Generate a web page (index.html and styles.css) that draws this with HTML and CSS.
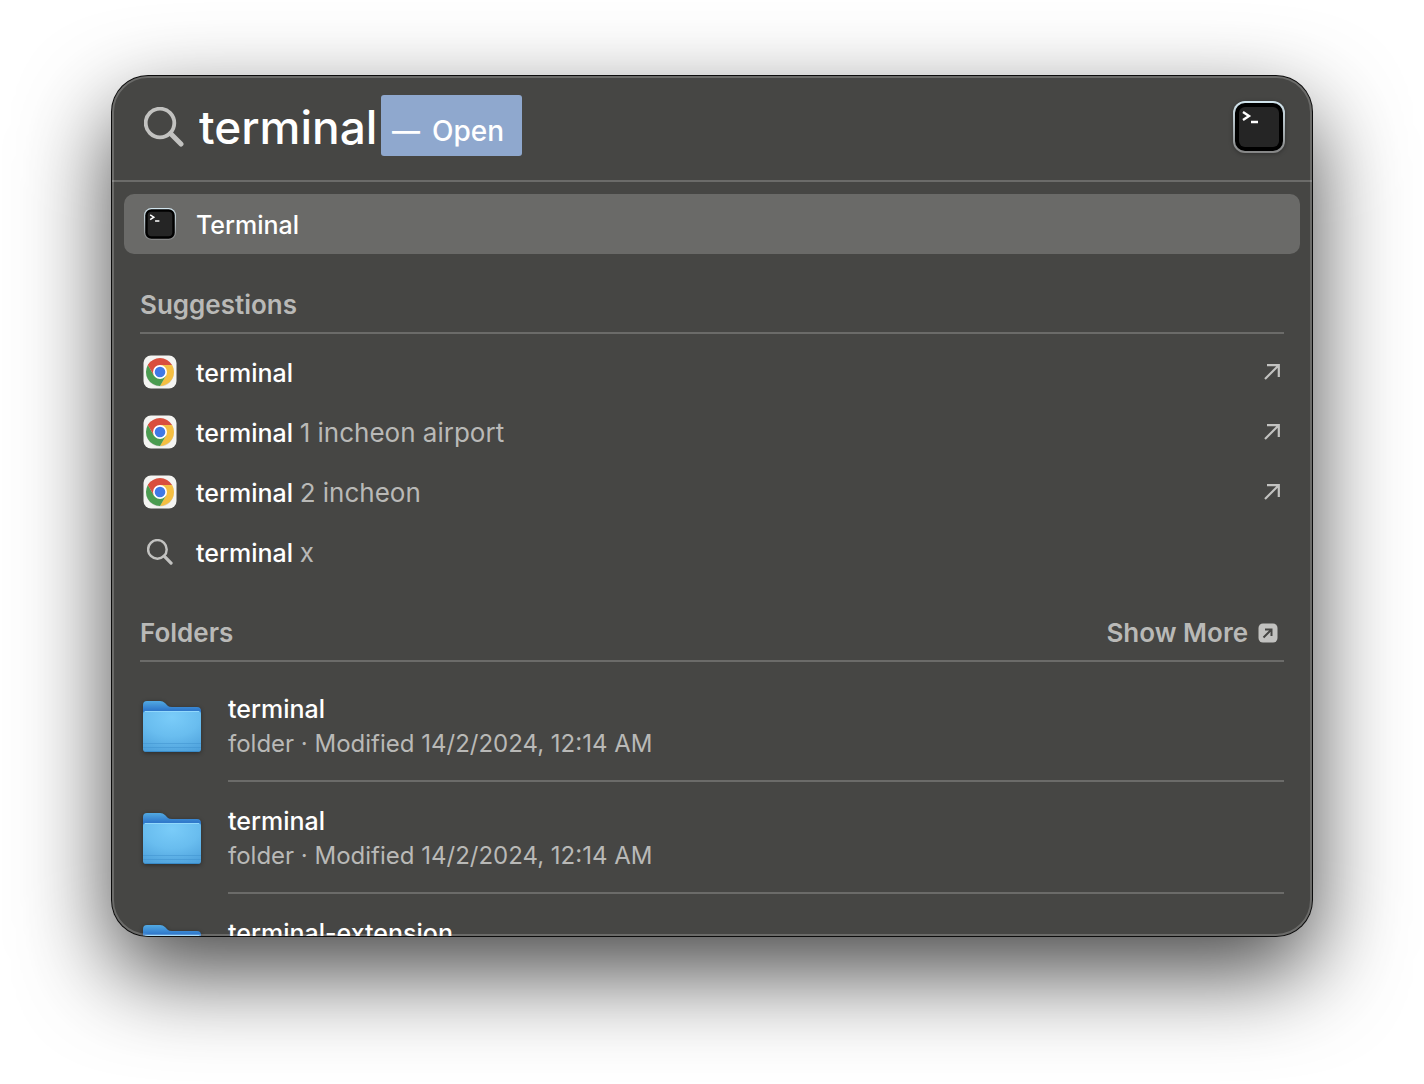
FILE: index.html
```html
<!DOCTYPE html>
<html lang="en">
<head>
<meta charset="utf-8">
<title>Search</title>
<link rel="stylesheet" href="styles.css">
</head>
<body>
<svg class="defs" aria-hidden="true">
  <defs>
    <linearGradient id="rim" x1="0" y1="0" x2="0" y2="1"><stop offset="0" stop-color="#d3e6ef"/><stop offset="1" stop-color="#858585"/></linearGradient>
    <radialGradient id="front" cx=".5" cy=".15" r=".95"><stop offset="0" stop-color="#7accf9"/><stop offset=".5" stop-color="#69bdef"/><stop offset="1" stop-color="#4c9fda"/></radialGradient>
    <linearGradient id="back" x1="0" y1="0" x2="0" y2="1"><stop offset="0" stop-color="#52aae3"/><stop offset=".3" stop-color="#3079cb"/></linearGradient>
    <symbol id="terminal" viewBox="0 0 52 52">
      <rect width="52" height="52" rx="12" fill="url(#rim)"/>
      <rect x="2" y="2" width="48" height="48" rx="10" fill="#000"/>
      <rect x="6" y="6" width="40" height="40" rx="6" fill="#252525"/>
      <path d="M10 11l6 4-6 4M18 21h7" fill="none" stroke="#fff" stroke-width="2.400"/>
    </symbol>
    <symbol id="chrome" viewBox="0 0 34 34">
      <rect x="0.5" y="0.5" width="33" height="33" rx="7.5" fill="#f4f4f2"/>
      <circle cx="17" cy="17.5" r="14" fill="#000" opacity=".12"/>
      <path d="M17 17 4.88 10A14 14 0 0 1 29.12 10Z" fill="#d94f3e"/>
      <path d="M17 10H29.12A14 14 0 0 1 17 31L23.06 20.5Z" fill="#f4bf42"/>
      <path d="M10.94 20.5 4.88 10A14 14 0 0 0 17 31L23.06 20.5 17 17Z" fill="#4a9c50"/>
      <path d="M17 10 10.94 20.5 4.88 10A14 14 0 0 1 8 6.3Z" fill="#d94f3e"/>
      <circle cx="17" cy="17" r="7" fill="#fff"/>
      <circle cx="17" cy="17" r="5.3" fill="#4079e6"/>
    </symbol>
    <symbol id="search" viewBox="0 0 40 40">
      <circle cx="16" cy="16" r="14.300" fill="none" stroke="currentColor" stroke-width="3.800"/>
      <path d="M26.500 26.500 37 37" stroke="currentColor" stroke-width="5" stroke-linecap="round"/>
    </symbol>
    <symbol id="arrow" viewBox="0 0 16 16">
      <path d="M1 15 14.500 1.500M3 1.200H14.800V13" fill="none" stroke="currentColor" stroke-width="2.200"/>
    </symbol>
    <symbol id="folder" viewBox="0 0 58 52">
      <path d="M0 4Q0 0 4 0H17Q20 0 22 2L25 5Q26 6 29 6H54Q58 6 58 10V30H0Z" fill="url(#back)"/>
      <path d="M0 13Q0 10 3 10H55Q58 10 58 13V48Q58 51 55 51H3Q0 51 0 48Z" fill="url(#front)"/>
      <path d="M2 10.500H56" stroke="#91d8fc"/>
      <path d="M0 42.500H58M0 46.500H58" stroke="#3f92cf" opacity=".5"/>
      <path d="M2 50.500H56" stroke="#398bc8"/>
    </symbol>
  </defs>
</svg>
<main class="panel">
  <header class="searchbar">
    <svg class="search-icon"><use href="#search"/></svg>
    <input class="query" type="text" value="terminal" aria-label="Search">
    <span class="completion"><span>—</span><span>Open</span></span>
    <svg class="app-icon"><use href="#terminal"/></svg>
  </header>
  <div class="results">
    <a class="row selected" href="#"><svg class="icon"><use href="#terminal"/></svg><span class="label">Terminal</span></a>
    <section>
      <div class="heading"><h2>Suggestions</h2></div>
      <div class="list">
        <a class="row" href="#"><svg class="icon chrome"><use href="#chrome"/></svg><span class="label">terminal</span><svg class="arrow"><use href="#arrow"/></svg></a>
        <a class="row" href="#"><svg class="icon chrome"><use href="#chrome"/></svg><span class="label">terminal <span class="rest">1 incheon airport</span></span><svg class="arrow"><use href="#arrow"/></svg></a>
        <a class="row" href="#"><svg class="icon chrome"><use href="#chrome"/></svg><span class="label">terminal <span class="rest">2 incheon</span></span><svg class="arrow"><use href="#arrow"/></svg></a>
        <a class="row" href="#"><span class="icon find"><svg><use href="#search"/></svg></span><span class="label">terminal <span class="rest">x</span></span></a>
      </div>
    </section>
    <section>
      <div class="heading">
        <h2>Folders</h2>
        <button class="more" type="button">Show More
          <svg viewBox="0 0 20 20"><rect x="0.500" y="0.500" width="19" height="19" rx="4.500" fill="#c2c2c0"/><path d="M5.500 14.500 13 7M7 6.500H13.500V13" fill="none" stroke="#464644" stroke-width="2"/></svg>
        </button>
      </div>
      <div class="list">
        <a class="file" href="#"><svg class="folder"><use href="#folder"/></svg><span class="info"><span class="name">terminal</span><span class="meta">folder · Modified 14/2/2024, 12:14 AM</span></span></a>
        <a class="file" href="#"><svg class="folder"><use href="#folder"/></svg><span class="info"><span class="name">terminal</span><span class="meta">folder · Modified 14/2/2024, 12:14 AM</span></span></a>
        <a class="file" href="#"><svg class="folder"><use href="#folder"/></svg><span class="info"><span class="name">terminal-extension</span></span></a>
      </div>
    </section>
  </div>
</main>
</body>
</html>
```
FILE: styles.css
```css
* { box-sizing: border-box; }
body {
  margin: 0;
  height: 100vh;
  padding: 76px 112px 148px;
  background: #fff;
  color: #fff;
  font: 500 25px/36px Inter, sans-serif;
  overflow: hidden;
}
a { color: inherit; text-decoration: none; }
svg { display: block; flex: none; }
.defs { position: absolute; width: 0; height: 0; }

.panel {
  position: relative;
  display: flex;
  flex-direction: column;
  height: 100%;
  border-radius: 36px;
  background: #464644;
  box-shadow: 0 0 0 1px #0c0c0c, 0 36px 92px rgba(0, 0, 0, .73);
}
.panel::after {
  content: "";
  position: absolute;
  inset: 0;
  border: 2px solid rgba(255, 255, 255, .2);
  border-radius: 36px;
  pointer-events: none;
}

.searchbar {
  display: flex;
  align-items: center;
  flex: none;
  height: 106px;
  padding: 0 27px 2px 32px;
  border-bottom: 2px solid #6b6b69;
}
.search-icon { width: 40px; height: 40px; color: #c2c2c0; }
.query {
  width: 181px;
  margin: 0 0 0 15px;
  padding: 0;
  border: 0;
  outline: 0;
  background: none;
  color: inherit;
  font: 500 46px/60px Inter, sans-serif;
}
.completion {
  display: flex;
  gap: 12px;
  height: 61px;
  margin: 0 0 4px 1px;
  padding: 6px 18px 0 11px;
  border-radius: 3px;
  background: #8fa8ce;
  font-size: 28px;
  line-height: 60px;
}
.app-icon { width: 52px; height: 52px; margin-left: auto; filter: drop-shadow(0 1px 2px rgba(0, 0, 0, .3)); }

.results { flex: 1; min-height: 0; padding: 12px; overflow: hidden; border-radius: 0 0 36px 36px; }
.row {
  display: flex;
  align-items: center;
  gap: 20px;
  height: 60px;
  padding: 0 20px;
  border-radius: 10px;
}
.selected { background: #6a6a68; }
.label { padding-top: 2px; }
.icon { width: 32px; height: 32px; }
.chrome { width: 34px; height: 34px; margin: 0 -1px; }
.find { padding: 3px; color: #c2c2c0; }
.find svg { width: 26px; height: 26px; }
.rest { color: #b9b9b7; font-weight: 400; font-size: 26px; }
.arrow { width: 16px; height: 16px; margin-left: auto; color: #c2c2c0; }

.heading {
  display: flex;
  justify-content: space-between;
  align-items: flex-end;
  height: 80px;
  margin: 0 16px;
  padding-bottom: 9px;
  border-bottom: 2px solid #6b6b69;
}
h2, .more { margin: 0; color: #b9b9b7; font: 600 26px/36px Inter, sans-serif; }
.more { display: flex; align-items: center; gap: 10px; padding: 0 6px; border: 0; background: none; }
.more svg { width: 20px; height: 20px; }
.list { padding-top: 8px; }

.file { display: flex; gap: 27px; height: 112px; padding: 0 16px 0 19px; }
.folder { width: 58px; height: 52px; margin-top: 31px; filter: drop-shadow(0 1px 2px rgba(0, 0, 0, .4)); }
.info { display: flex; flex-direction: column; flex: 1; padding-top: 21px; border-bottom: 2px solid #6b6b69; }
.meta { color: #b9b9b7; font-weight: 400; font-size: 24px; line-height: 34px; }
```
